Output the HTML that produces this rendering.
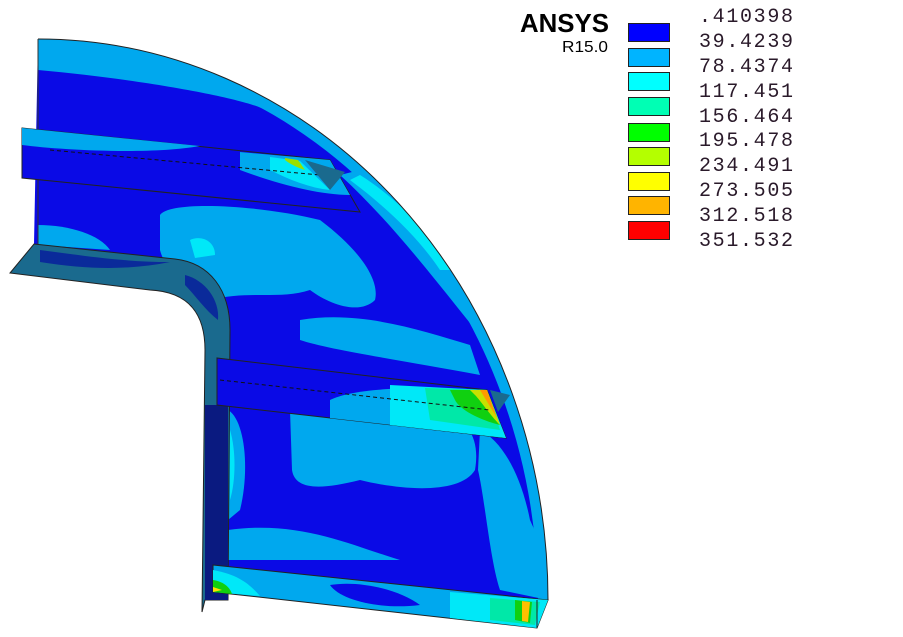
<!DOCTYPE html>
<html><head><meta charset="utf-8"><style>
html,body{margin:0;padding:0;background:#fff;width:903px;height:637px;overflow:hidden}
svg{display:block}
</style></head><body>
<svg width="903" height="637" viewBox="0 0 903 637" xmlns="http://www.w3.org/2000/svg">
<defs>
<clipPath id="plate"><path d="M38,39 A510,561 0 0 1 548,600 L228,585 L230,330 C230,290 205,262 170,259 L34,244 Z"/></clipPath>
</defs>
<g clip-path="url(#plate)">
<rect x="0" y="0" width="600" height="637" fill="#0a0ae6"/>
<path d="M38,39 A510,561 0 0 1 548,600 L538,600 A500,551 0 0 0 38,50 Z" fill="#00a8ee"/>
<path d="M38,39 L38,70 C150,80 250,100 265,110 C275,90 200,60 38,39Z" fill="#00a8ee"/>
<path d="M340,175 C400,230 450,300 500,360 L515,360 C470,290 420,220 360,170Z" fill="#00a8ee"/>
<path d="M350,180 C390,210 420,240 440,270 L455,270 C430,235 400,200 360,175Z" fill="#00e8f8"/>
<path d="M160,215 C170,200 260,205 320,220 C360,250 380,280 375,300 C360,315 330,305 310,290 C280,300 250,290 210,300 C190,300 165,270 160,250Z" fill="#00a8ee"/>
<path d="M38,225 C70,225 100,235 110,250 L38,245Z" fill="#00a8ee"/>
<path d="M300,320 C360,310 420,330 470,345 L480,375 C400,360 330,350 300,340Z" fill="#00a8ee"/>
<path d="M290,410 C300,400 370,400 440,410 C470,420 480,440 475,470 C460,495 400,490 360,480 C320,490 295,490 292,470Z" fill="#00a8ee"/>
<path d="M480,430 C500,440 520,470 530,520 L548,560 L548,600 L500,590 C490,560 485,500 478,470Z" fill="#00a8ee"/>
<path d="M228,410 C245,420 250,470 240,510 L228,520Z" fill="#00a8ee"/>
<path d="M230,430 C236,450 236,480 230,500Z" fill="#00e8f8"/>
<path d="M228,530 C300,520 350,545 400,560 L228,560Z" fill="#00a8ee"/>
<path d="M190,240 C200,235 215,240 215,255 L195,258Z" fill="#00e8f8"/>
</g>
<path d="M38,39 A510,561 0 0 1 548,600" fill="none" stroke="#222" stroke-width="1"/>
<line x1="38" y1="39" x2="38" y2="244" stroke="#333" stroke-width="1"/>
<path d="M34,244 L175,259 C210,263 230,290 230,330 L228,600 L205,600 L202,612 L205,350 C205,315 190,292 150,290 L10,273 Z" fill="#1a6a8e" stroke="#222" stroke-width="1"/>
<path d="M40,250 C80,255 120,262 170,262 C130,270 90,270 40,262Z" fill="#0a2a9a"/>
<path d="M185,275 C205,280 220,300 218,320 C205,310 195,295 185,285Z" fill="#0a2a9a"/>
<path d="M205,405 L228,405 L228,600 L205,600Z" fill="#0a1a80"/>
<path d="M22,128 L330,160 L360,212 L22,178 Z" fill="#0a0ae6" stroke="#222" stroke-width="1"/>
<path d="M22,128 L200,146 C150,155 60,150 22,145Z" fill="#00a8ee"/>
<path d="M240,152 L330,160 L350,195 C320,195 280,185 240,170Z" fill="#00a8ee"/>
<path d="M270,157 L300,161 L330,190 C310,188 290,180 270,170Z" fill="#00e8f8"/>
<path d="M285,158 L298,160 L305,170 C298,168 290,164 285,160Z" fill="#9be000"/>
<line x1="50" y1="150" x2="320" y2="175" stroke="#111" stroke-width="1" stroke-dasharray="4,3"/>
<path d="M305,160 L345,172 L330,190Z" fill="#1a6a8e"/>
<path d="M217,358 L487,390 L506,438 L217,405 Z" fill="#0a0ae6" stroke="#222" stroke-width="1"/>
<path d="M330,400 C350,390 400,385 487,390 L506,438 L330,418Z" fill="#00a8ee"/>
<path d="M390,385 L487,390 L506,438 L390,425Z" fill="#00e8f8"/>
<path d="M425,388 L487,390 L500,430 L430,420Z" fill="#00e8a8"/>
<path d="M450,390 L487,390 L500,425 C480,420 460,410 455,400Z" fill="#10d010"/>
<path d="M470,390 L487,390 L500,425 C490,415 480,400 475,395Z" fill="#c8e000"/>
<path d="M480,390 L487,390 L497,418Z" fill="#ff9a00"/>
<line x1="220" y1="380" x2="490" y2="410" stroke="#111" stroke-width="1" stroke-dasharray="4,3"/>
<path d="M490,390 L510,395 L498,412Z" fill="#1a6a8e"/>
<path d="M213,565 L548,600 L537,628 L213,592 Z" fill="#00a8ee" stroke="#222" stroke-width="1"/>
<path d="M330,585 C360,580 400,590 420,605 C380,610 340,600 330,585Z" fill="#0a0ae6"/>
<path d="M213,570 C240,575 250,585 260,596 L213,592Z" fill="#00e8f8"/>
<path d="M213,580 C225,582 230,588 232,594 L213,592Z" fill="#10d010"/>
<path d="M213,587 L222,590 L213,592Z" fill="#ffe000"/>
<path d="M450,592 L548,600 L537,628 L450,618Z" fill="#00e8f8"/>
<path d="M490,598 L540,602 L535,625 L490,620Z" fill="#00e8a8"/>
<path d="M515,600 L532,602 L530,623 L515,620Z" fill="#10d010"/>
<path d="M522,601 L530,602 L528,622 L522,621Z" fill="#ffc000"/>
<line x1="537" y1="600" x2="537" y2="628" stroke="#222"/>
<text x="520" y="32" font-family="Liberation Sans Narrow, Liberation Sans, sans-serif" font-weight="bold" font-size="26" fill="#000" textLength="89" lengthAdjust="spacingAndGlyphs">ANSYS</text>
<text x="562" y="52" font-family="Liberation Sans Narrow, Liberation Sans, sans-serif" font-size="16" fill="#000" textLength="46" lengthAdjust="spacingAndGlyphs">R15.0</text>
<g stroke="#222" stroke-width="1">
<rect x="628.5" y="23.5" width="41" height="18" fill="#0000ff"/>
<rect x="628.5" y="48.5" width="41" height="18" fill="#00b4ff"/>
<rect x="628.5" y="72.5" width="41" height="18" fill="#00ffff"/>
<rect x="628.5" y="97.5" width="41" height="18" fill="#00ffb4"/>
<rect x="628.5" y="123.5" width="41" height="18" fill="#00ff00"/>
<rect x="628.5" y="147.5" width="41" height="18" fill="#b4ff00"/>
<rect x="628.5" y="172.5" width="41" height="18" fill="#ffff00"/>
<rect x="628.5" y="196.5" width="41" height="18" fill="#ffb400"/>
<rect x="628.5" y="221.5" width="41" height="18" fill="#ff0000"/>
</g>
<g font-family="Liberation Mono, monospace" font-size="20" fill="#2a1a2a">
<text x="699" y="22" textLength="94">.410398</text>
<text x="699" y="47" textLength="94">39.4239</text>
<text x="699" y="72" textLength="94">78.4374</text>
<text x="699" y="97" textLength="94">117.451</text>
<text x="699" y="122" textLength="94">156.464</text>
<text x="699" y="146" textLength="94">195.478</text>
<text x="699" y="171" textLength="94">234.491</text>
<text x="699" y="196" textLength="94">273.505</text>
<text x="699" y="221" textLength="94">312.518</text>
<text x="699" y="246" textLength="94">351.532</text>
</g>
</svg>
</body></html>
